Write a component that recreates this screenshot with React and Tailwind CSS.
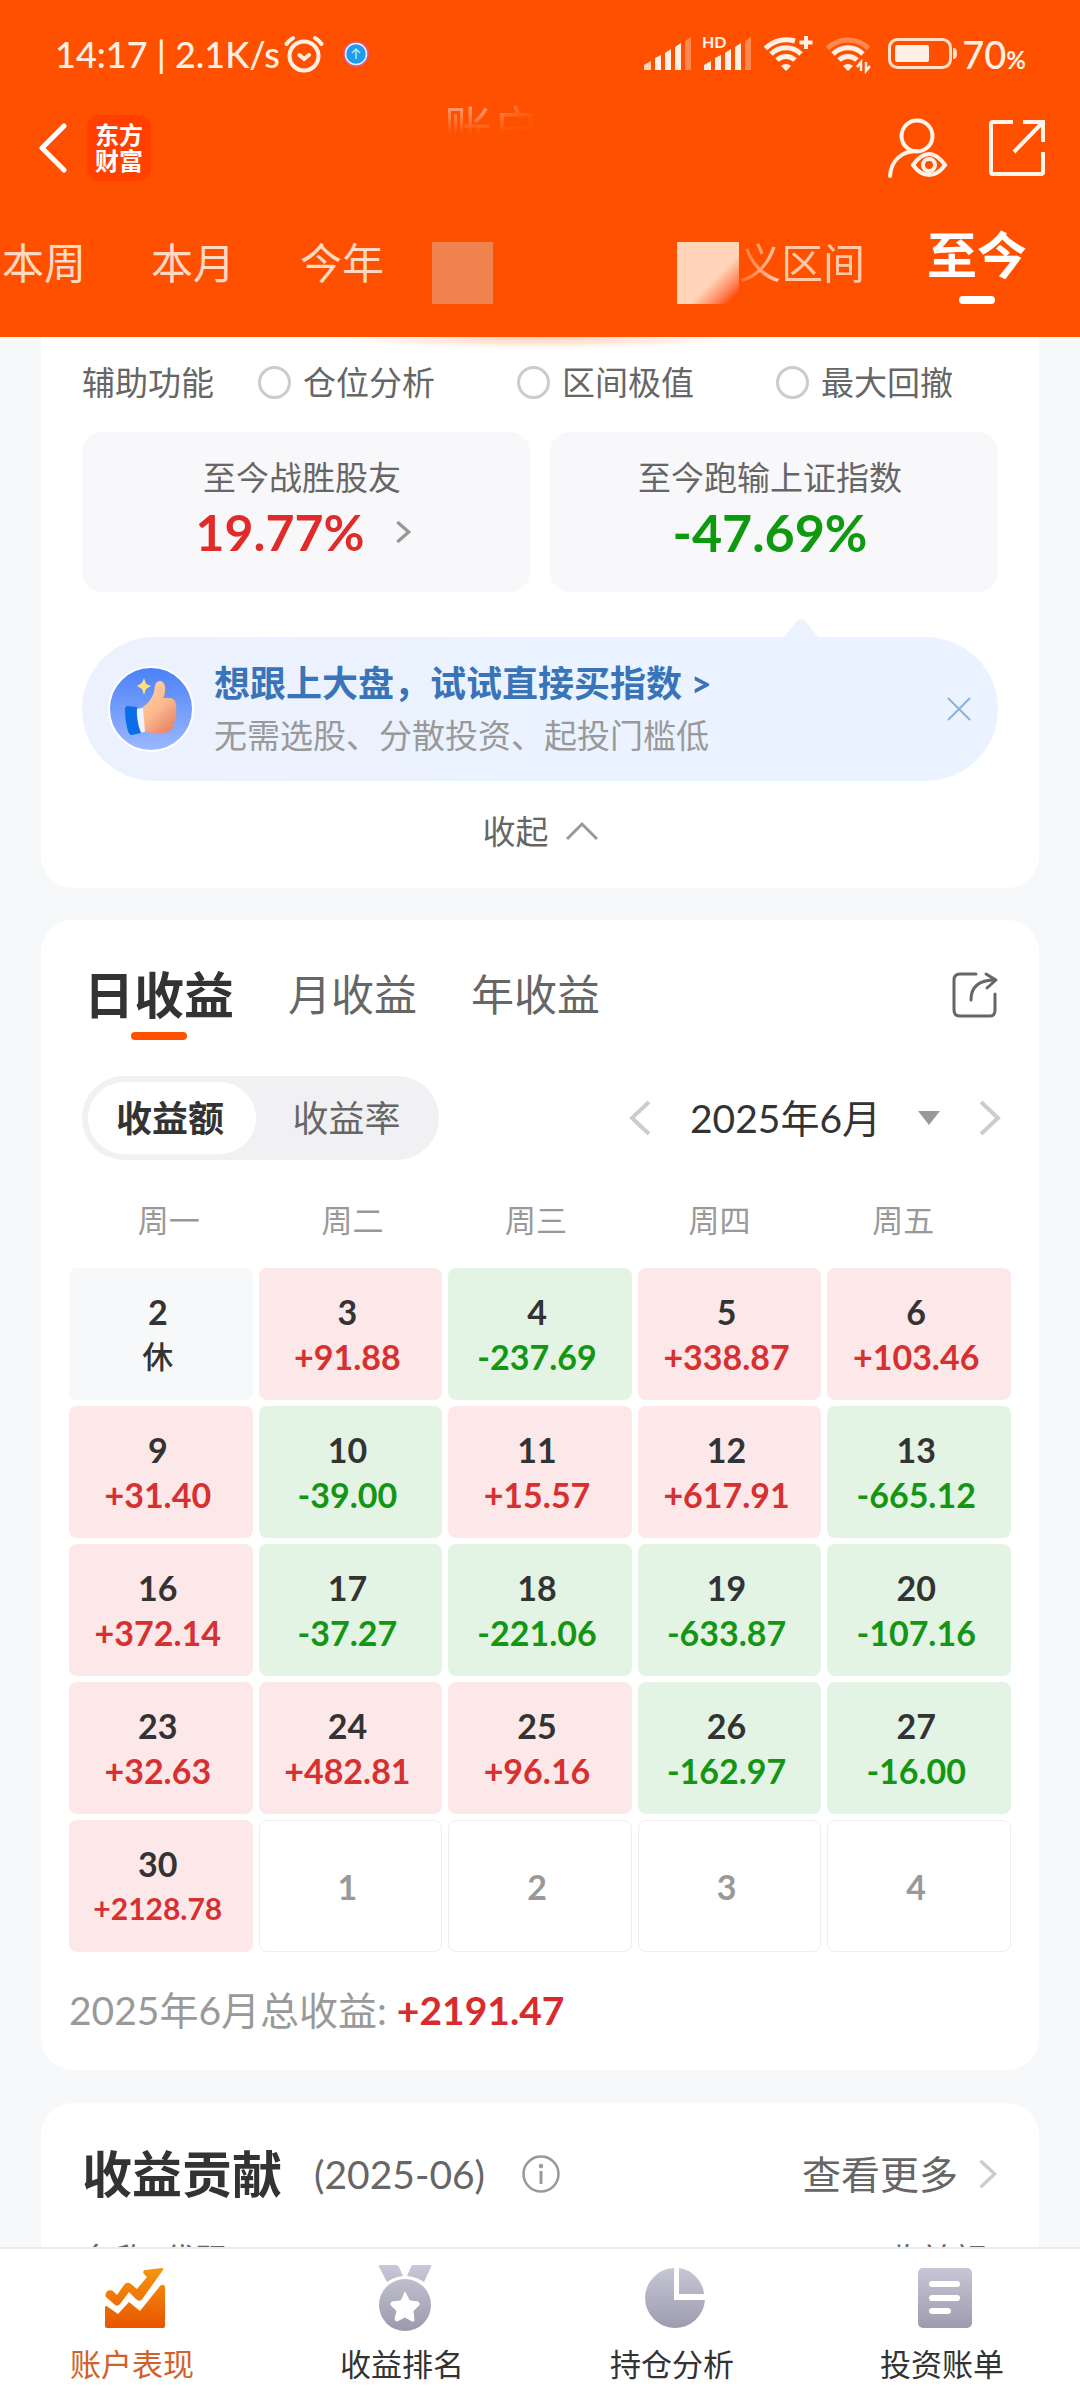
import { useState } from 'react';

const periods = ['本周', '本月', '今年'];
const helpers = ['仓位分析', '区间极值', '最大回撤'];
const profitTabs = ['日收益', '月收益', '年收益'];
const weekdays = ['周一', '周二', '周三', '周四', '周五'];

const weeks = [
    [
        { day: 2, value: '休' },
        { day: 3, value: '+91.88' },
        { day: 4, value: '-237.69' },
        { day: 5, value: '+338.87' },
        { day: 6, value: '+103.46' },
    ],
    [
        { day: 9, value: '+31.40' },
        { day: 10, value: '-39.00' },
        { day: 11, value: '+15.57' },
        { day: 12, value: '+617.91' },
        { day: 13, value: '-665.12' },
    ],
    [
        { day: 16, value: '+372.14' },
        { day: 17, value: '-37.27' },
        { day: 18, value: '-221.06' },
        { day: 19, value: '-633.87' },
        { day: 20, value: '-107.16' },
    ],
    [
        { day: 23, value: '+32.63' },
        { day: 24, value: '+482.81' },
        { day: 25, value: '+96.16' },
        { day: 26, value: '-162.97' },
        { day: 27, value: '-16.00' },
    ],
    [{ day: 30, value: '+2128.78' }, { day: 1 }, { day: 2 }, { day: 3 }, { day: 4 }],
];

const Signal = ({ hd }) => (
    <svg viewBox="0 0 48 36" className="w-12 h-9 overflow-visible" fill="#fff0e6">
        <path d="M0 34v-5l7-4v9z" opacity={hd ? 1 : 0.8} />
        <path d="M11 34V22l6-3v15z" />
        <path d="M21 34V17l6-4v21z" />
        <path d="M31 34V11l6-4v27z" />
        <path d="M41 34V5l6-4v33z" opacity="0.35" />
        {hd && (
            <text x="-2" y="12" fontSize="16" fontWeight="700">HD</text>
        )}
    </svg>
);

const Wifi = ({ weak }) => (
    <svg viewBox="0 0 50 36" className="w-[50px] h-9 overflow-visible" fill="none" stroke="#fff0e6" strokeWidth="5">
        <path d={weak ? 'M1.500 12.500A29 29 0 0 1 42.500 12.500' : 'M1.500 12.500A29 29 0 0 1 31 5'} opacity={weak ? 0.35 : 1} />
        <path d="M7 18A21 21 0 0 1 37 18" />
        <path d="M13 24A13 13 0 0 1 31 24" />
        <path d="M22 35l-5-5a7 7 0 0 1 10 0z" fill="#fff0e6" stroke="none" />
        {weak ? (
            <path d="M35 35v-9l-4 5M40 26v9l4-5" strokeWidth="2.500" />
        ) : (
            <path d="M42 0v13M35.500 6.500h13" strokeWidth="4" />
        )}
    </svg>
);

const StatusBar = () => (
    <div className="flex items-center h-[108px] pl-[55px] pr-[54px] text-[#fff0e6]">
        <span className="text-4xl leading-12 font-medium">14:17 | 2.1K/s</span>
        <svg viewBox="0 0 40 38" className="w-10 h-[38px] ml-1" fill="none" stroke="currentColor" strokeWidth="4" strokeLinecap="round">
            <circle cx="20" cy="21" r="14.500" />
            <path d="M15.500 20l4.500 4 5-4M2.500 9A20 20 0 0 1 9 3M37.500 9A20 20 0 0 0 31 3" />
        </svg>
        <svg viewBox="0 0 28 28" className="w-7 h-7 ml-[18px]" fill="none">
            <circle cx="14" cy="14" r="13" fill="#e05a78" />
            <circle cx="14" cy="14" r="10.500" fill="#1f9cf0" stroke="#e8f0ff" strokeWidth="1.500" />
            <path d="M14 19V9.500M10 13l4-4 4 4" stroke="#a5f0e0" strokeWidth="1.500" />
        </svg>
        <div className="flex items-center ml-auto gap-3">
            <Signal />
            <Signal hd />
            <Wifi />
            <Wifi weak />
            <svg viewBox="0 0 70 32" className="w-[70px] h-8" fill="none">
                <rect x="1.500" y="1.500" width="61" height="28" rx="8" stroke="#ffe0cc" strokeWidth="3" />
                <rect x="7" y="7" width="34" height="17" rx="2" fill="#fff0e6" />
                <path d="M65 10c3 0 4 2 4 5.500s-1 5.500-4 5.500z" fill="#ffe0cc" />
            </svg>
            <span className="text-[38px] leading-12 -ml-2 font-medium">
                70<span className="text-2xl font-bold">%</span>
            </span>
        </div>
    </div>
);

const Header = () => (
    <header className="relative shrink-0 bg-[#ff5000] text-white">
        <StatusBar />
        <div className="flex items-center h-20 pl-9 pr-[34px]">
            <button aria-label="返回">
                <svg viewBox="0 0 34 50" className="w-[34px] h-[50px]" fill="none" stroke="#fff" strokeWidth="5" strokeLinecap="round" strokeLinejoin="round">
                    <path d="M28 3L6 25l22 22" />
                </svg>
            </button>
            <div className="flex flex-col items-center justify-center w-16 h-[66px] ml-[17px] rounded-xl bg-[#ff4000] text-2xl leading-[26px] font-bold">
                <span>东方</span>
                <span>财富</span>
            </div>
            <h1 className="absolute left-1/2 top-[98px] -translate-x-1/2 w-48 text-5xl leading-[60px] whitespace-nowrap opacity-40 mask-b-from-20% mask-b-to-60% mask-r-from-20% mask-r-to-50%">
                账户表现
            </h1>
            <div className="flex ml-auto gap-10">
                <button aria-label="账户可见性">
                    <svg viewBox="0 0 62 60" className="w-[62px] h-[60px]" fill="none" stroke="#fff3ea" strokeWidth="4" strokeLinecap="round">
                        <circle cx="31" cy="18" r="15.500" />
                        <path d="M4 58C5 43 15 33 31 33" />
                        <path d="M27 47c5-7 10-11 16-11s11 4 16 11c-5 7-10 10-16 10s-11-3-16-10z" />
                        <circle cx="43" cy="47" r="6" />
                    </svg>
                </button>
                <button aria-label="分享">
                    <svg viewBox="0 0 58 58" className="w-[58px] h-[58px]" fill="none" stroke="#fff3ea" strokeWidth="4">
                        <path d="M25 3H5q-2 0-2 2v48q0 2 2 2h48q2 0 2-2V33M35 3h20v20M55 3L26 33" />
                    </svg>
                </button>
            </div>
        </div>
        <nav className="flex items-center h-[149px] pl-[2px] pr-[53px] text-[42px] leading-[62px]">
            <div className="flex gap-[65px] text-[#ffd9c4]">
                {periods.map((p) => (
                    <button key={p}>{p}</button>
                ))}
            </div>
            <span className="w-[61px] h-[62px] ml-12 mt-5 bg-[#f08250]" />
            <span className="w-[62px] h-[62px] ml-auto mt-5 bg-linear-to-br from-[#ffd4b8] from-60% to-[#ff5000] to-90%" />
            <button className="text-[#ffc8a8] mask-l-from-70% mask-l-to-110%">义区间</button>
            <button className="relative ml-[62px] -mt-4 text-[50px] leading-[62px] font-bold">
                至今
                <span className="absolute left-1/2 top-[72px] w-9 h-2 -translate-x-1/2 rounded-full bg-white" />
            </button>
        </nav>
        <div className="absolute top-full inset-x-0 z-10 h-3 bg-[radial-gradient(ellipse_20%_100%_at_50%_0%,#ffcfb5,transparent)]" />
    </header>
);

const Chevron = ({ className, d, width = 4 }) => (
    <svg viewBox="0 0 24 36" className={className} fill="none" stroke="currentColor" strokeWidth={width}>
        <path d={d} />
    </svg>
);

const ThumbIcon = () => (
    <svg viewBox="0 0 86 86" className="w-[86px] h-[86px] shrink-0">
        <defs>
            <linearGradient id="thumbBg" x1="0" y1="0" x2="0" y2="1">
                <stop offset="0" stopColor="#4a80f8" />
                <stop offset="1" stopColor="#9cb8ff" />
            </linearGradient>
            <linearGradient id="thumbSkin" x1="0" y1="0" x2="0.6" y2="1">
                <stop offset="0" stopColor="#ffd2a8" />
                <stop offset="0.6" stopColor="#fdb98e" />
                <stop offset="1" stopColor="#e88a6c" />
            </linearGradient>
        </defs>
        <circle cx="43" cy="43" r="42" fill="url(#thumbBg)" stroke="#fff" strokeWidth="2" />
        <path d="M33 42c6-3 11-9 13-16 1-6 1-10 5-11 5-1 7 5 6 10 0 3-1 5-2 7h6c5 0 7 3 7 7 1 3 0 5 0 8 1 5 0 7-2 10 0 6-4 9-9 10-8 2-17 0-24-4z" fill="url(#thumbSkin)" />
        <path d="M57 43h8M57 51h9M56 59h8" stroke="#f0a078" strokeWidth="1" opacity="0.6" />
        <path d="M28 43l7-1 2 24-7 1z" fill="#eef4ff" />
        <path d="M17 43q0-3 3-3l9 1q-1 13 4 26l-9 2q-3 0-4-4-3-10-3-22z" fill="#0b6ee8" />
        <path d="M36 12l2 6 5 2-5 3-2 6-2-6-5-3 5-3z" fill="#ffe07a" />
    </svg>
);

const OverviewCard = () => (
    <section className="mx-[41px] px-[41px] pb-8 rounded-b-[32px] bg-white">
        <div className="flex items-center h-[90px] text-[33px] leading-12 text-[#666]">
            <span className="mr-[44px]">辅助功能</span>
            <div className="flex gap-[82px]">
                {helpers.map((h) => (
                    <label key={h} className="flex items-center gap-3">
                        <input type="checkbox" className="appearance-none w-[33px] h-[33px] border-3 border-[#ccc] rounded-full checked:bg-[#ff5000]" />
                        {h}
                    </label>
                ))}
            </div>
        </div>

        <div className="grid grid-cols-2 gap-5 mt-[5px] text-center">
            <button className="flex flex-col items-center h-40 pt-5 pr-2 rounded-[20px] bg-[#f8f8fa]">
                <span className="text-[33px] leading-[50px] text-[#666]">至今战胜股友</span>
                <span className="flex items-center gap-8 pl-1 text-[50px] leading-[60px] font-bold text-[#e02b2b]">
                    19.77%
                    <Chevron className="w-4 h-6 text-[#999]" d="M2 3l17 15L2 33" width={5} />
                </span>
            </button>
            <div className="flex flex-col items-center h-40 pt-5 pr-2 rounded-[20px] bg-[#f8f8fa]">
                <span className="text-[33px] leading-[50px] text-[#666]">至今跑输上证指数</span>
                <span className="text-[52px] leading-[60px] font-bold text-[#0f990f]">-47.69%</span>
            </div>
        </div>

        <div className="relative flex items-center h-36 mt-[45px] pl-[26px] pr-[27px] rounded-full bg-linear-to-r from-[#edf1fe] to-[#eaf3ff] to-50%">
            <svg viewBox="0 0 34 18" className="absolute right-[180px] bottom-full w-[34px] h-[18px]" fill="#edf3fe">
                <path d="M0 18L12 3q5-6 10 0l12 15z" />
            </svg>
            <ThumbIcon />
            <a href="#" className="ml-5">
                <p className="text-4xl leading-[52px] font-bold text-[#3a74b8]">想跟上大盘，试试直接买指数 &gt;</p>
                <p className="text-[33px] leading-[52px] text-[#999]">无需选股、分散投资、起投门槛低</p>
            </a>
            <button aria-label="关闭" className="ml-auto">
                <svg viewBox="0 0 24 24" className="w-6 h-6" stroke="#8fb0d8" strokeWidth="2">
                    <path d="M1 1l22 22M23 1L1 23" />
                </svg>
            </button>
        </div>

        <button className="flex items-center gap-[17px] mx-auto mt-[25px] text-[33px] leading-[50px] text-[#666]">
            收起
            <svg viewBox="0 0 32 20" className="w-8 h-5" fill="none" stroke="#999" strokeWidth="3">
                <path d="M1 18L16 3l15 15" />
            </svg>
        </button>
    </section>
);

const cellStyle = (value) => {
    if (!value) return 'border border-[#eee] text-[#999]';
    if (value[0] === '+') return 'bg-[#fce8e8] text-[#333]';
    if (value[0] === '-') return 'bg-[#e3f4e4] text-[#333]';
    return 'bg-[#f7f8fa] text-[#333]';
};

const valueStyle = (value) => {
    if (value[0] === '+') return value.length > 7 ? 'text-[30px] text-[#d63031]' : 'text-[#d63031]';
    return value[0] === '-' ? 'text-[#149614]' : 'text-[31px] font-medium';
};

const CalendarCard = () => {
    const [tab, setTab] = useState('日收益');

    return (
        <section className="mx-[41px] mt-8 px-7 pb-8 rounded-[32px] bg-white">
            {/* Tabs */}
            <div className="flex items-center h-[150px] pl-[15px] pr-3 gap-[54px]">
                {profitTabs.map((t) => (
                    <button
                        key={t}
                        onClick={() => setTab(t)}
                        className={t === tab ? 'relative text-[50px] leading-[60px] font-bold text-[#333]' : 'text-[43px] leading-[60px] text-[#666]'}
                    >
                        {t}
                        {t === tab && <span className="absolute left-1/2 top-[67px] w-14 h-2 -translate-x-1/2 rounded-full bg-[#ff5000]" />}
                    </button>
                ))}
                <button aria-label="分享收益" className="ml-auto">
                    <svg viewBox="0 0 48 48" className="w-12 h-12" fill="none" stroke="#666" strokeWidth="3" strokeLinecap="round" strokeLinejoin="round">
                        <path d="M25 3H9Q3 3 3 9v30q0 6 6 6h30q5 0 5-6V23" />
                        <path d="M20 29C20 16 28 9 44 9M35 3l10 6-9 8" />
                    </svg>
                </button>
            </div>

            {/* Mode switch and month */}
            <div className="flex items-center justify-between mt-[6px] pl-[13px] pr-[9px]">
                <div className="flex p-[6px] rounded-full bg-[#f1f1f4] text-4xl leading-[54px]">
                    <button className="w-[168px] h-[72px] pr-1 rounded-full bg-white font-bold text-[#333]">收益额</button>
                    <button className="w-[177px] h-[72px] pl-1 text-[#666]">收益率</button>
                </div>
                <div className="flex items-center text-[#ccc]">
                    <button aria-label="上个月">
                        <Chevron className="w-6 h-9" d="M21 2L4 18l17 16" />
                    </button>
                    <label className="flex items-center ml-[38px] mr-[38px]">
                        <select aria-label="月份" className="appearance-none text-[39px] leading-[56px] text-[#333]">
                            <option>2025年6月</option>
                        </select>
                        <svg viewBox="0 0 22 14" className="w-[22px] h-[14px] ml-9 pointer-events-none" fill="#999">
                            <path d="M0 0h22L11 14z" />
                        </svg>
                    </label>
                    <button aria-label="下个月">
                        <Chevron className="w-6 h-9" d="M3 2l17 16L3 34" />
                    </button>
                </div>
            </div>

            {/* Calendar */}
            <table className="block mt-9">
                <thead className="block pl-2 pr-4">
                    <tr className="grid grid-cols-5 text-[31px] leading-12 text-[#999]">
                        {weekdays.map((d) => (
                            <th key={d} className="font-normal">{d}</th>
                        ))}
                    </tr>
                </thead>
                <tbody className="flex flex-col gap-[6px] mt-6">
                    {weeks.map((week, i) => (
                        <tr key={i} className="grid grid-cols-5 gap-[6px]">
                            {week.map(({ day, value }) => (
                                <td key={day} className={`flex flex-col items-center justify-center h-[132px] pr-[6px] rounded-lg text-[34px] leading-[45px] font-bold ${cellStyle(value)}`}>
                                    <span>{day}</span>
                                    {value && <span className={valueStyle(value)}>{value}</span>}
                                </td>
                            ))}
                        </tr>
                    ))}
                </tbody>
            </table>

            <p className="mt-[30px] text-[39px] leading-[56px] text-[#999]">
                2025年6月总收益: <span className="font-bold text-[#d92b2b]">+2191.47</span>
            </p>
        </section>
    );
};

const ContributionCard = () => (
    <section className="mx-[41px] mt-[33px] px-[41px] rounded-t-[32px] bg-white">
        <div className="flex items-center h-[132px] pt-[10px]">
            <h2 className="text-[50px] leading-[72px] font-bold text-[#333]">收益贡献</h2>
            <span className="ml-8 text-[39px] leading-[56px] text-[#666]">(2025-06)</span>
            <svg viewBox="0 0 40 40" className="w-10 h-10 ml-9" fill="none" stroke="#999" strokeWidth="2.500">
                <circle cx="20" cy="20" r="17.500" />
                <path d="M20 17v13" strokeWidth="3" />
                <circle cx="20" cy="12" r="1" />
            </svg>
            <a href="#" className="flex items-center gap-5 ml-auto text-[39px] leading-[56px] text-[#666]">
                查看更多
                <Chevron className="w-5 h-8 text-[#ccc]" d="M3 2l17 16L3 34" />
            </a>
        </div>
        <div className="flex justify-between pr-3 text-[33px] leading-12 text-[#666]">
            <span>名称/代码</span>
            <span>收益额</span>
        </div>
    </section>
);

const ChartIcon = () => (
    <svg viewBox="0 0 60 66" className="w-[60px] h-[66px]" fill="url(#orange)">
        <defs>
            <linearGradient id="orange" gradientUnits="userSpaceOnUse" x1="0" y1="3" x2="0" y2="63">
                <stop offset="0" stopColor="#f7960f" />
                <stop offset="1" stopColor="#e85500" />
            </linearGradient>
        </defs>
        <path d="M1 32c-2-5 4-9 8-5l3 3 7-10q3-4 7-1l6 5 10-12-3-3q-2-3 1-4l17-2q2 0 1 2L38 33q-3 5-7 1l-7-7-9 12q-3 3-6 0z" />
        <path d="M0 42q1-2 3 0l10 7 11-12 11 9 20-25q4-3 5 1v39q0 2-2 2H2q-2 0-2-2z" />
    </svg>
);

const MedalIcon = () => (
    <svg viewBox="0 0 60 66" className="w-[60px] h-[66px]" fill="url(#gray)">
        <defs>
            <linearGradient id="gray" gradientUnits="userSpaceOnUse" x1="0" y1="0" x2="0" y2="66">
                <stop offset="0" stopColor="#c8c8d8" />
                <stop offset="1" stopColor="#9a9aac" />
            </linearGradient>
        </defs>
        <path d="M5 0h16q2 0 3 2l4 9q-9 1-16 6L4 2q-1-2 1-2zM38 0h17q2 0 1 2l-7 15q-7-5-17-6l4-9q0-2 2-2z" />
        <circle cx="30" cy="40" r="26" />
        <path d="M30 27l4 8q1 1 2 1l7 1q2 1 1 3l-6 6 1 9q0 2-2 1l-7-4-8 4q-2 0-2-2l2-8-6-6q-1-2 1-3l8-1q1 0 2-2z" fill="#fff" stroke="#fff" />
    </svg>
);

const PieIcon = () => (
    <svg viewBox="0 0 60 66" className="w-[60px] h-[66px]" fill="url(#gray)">
        <path d="M29 3A30 30 0 1 0 60 35H29z" />
        <path d="M34 3A29 29 0 0 1 59 29H34z" />
    </svg>
);

const BillIcon = () => (
    <svg viewBox="0 0 60 66" className="w-[60px] h-[66px]">
        <rect x="3" y="3" width="54" height="60" rx="5" fill="url(#gray)" />
        <path d="M17 19h25M17 33h25M17 46h16" stroke="#fff" strokeWidth="6" strokeLinecap="round" />
    </svg>
);

const navItems = [
    { label: '账户表现', Icon: ChartIcon, active: true },
    { label: '收益排名', Icon: MedalIcon },
    { label: '持仓分析', Icon: PieIcon },
    { label: '投资账单', Icon: BillIcon },
];

const BottomNav = () => (
    <nav className="grid grid-cols-4 shrink-0 h-[153px] pt-4 border-t-2 border-[#ebebeb] bg-white">
        {navItems.map(({ label, Icon, active }) => (
            <a key={label} href="#" className={`flex flex-col items-center gap-[10px] text-[31px] leading-[46px] ${active ? 'text-[#d0622a]' : 'text-[#333]'}`}>
                <Icon />
                <span className="pr-[6px]">{label}</span>
            </a>
        ))}
    </nav>
);

const App = () => (
    <div className="flex flex-col h-screen bg-[#f6f8fa] font-['Lato','Noto_Sans_CJK_SC',sans-serif]">
        <Header />
        <main className="flex-1 min-h-0 overflow-y-auto [scrollbar-width:none]">
            <OverviewCard />
            <CalendarCard />
            <ContributionCard />
        </main>
        <BottomNav />
    </div>
);

export default App;
